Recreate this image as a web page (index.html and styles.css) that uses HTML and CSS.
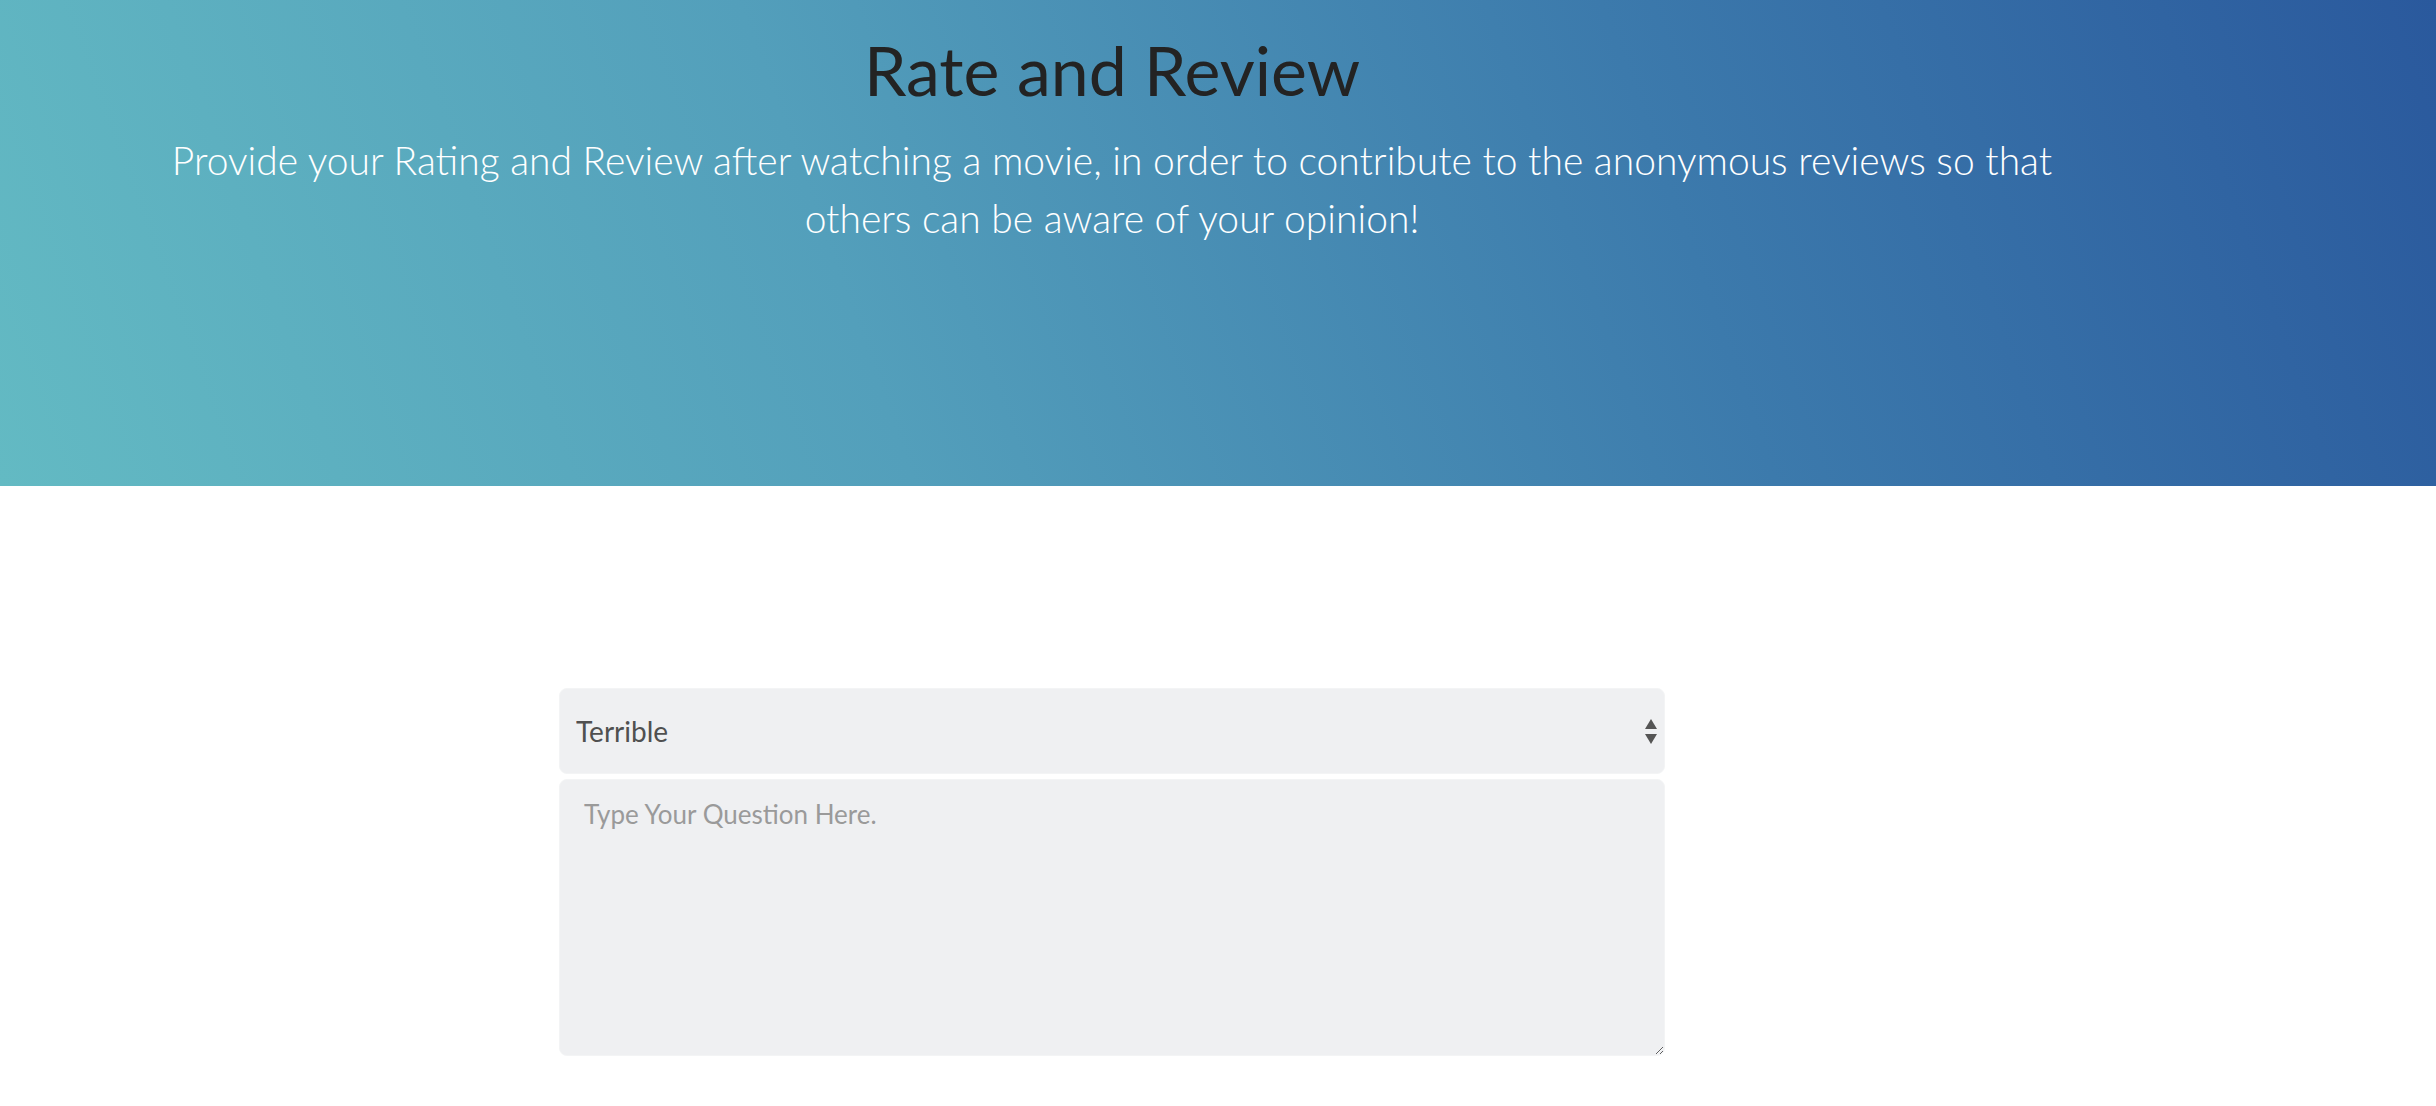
FILE: index.html
```html
<!DOCTYPE html>
<html lang="en">
<head>
<meta charset="utf-8">
<title>Rate and Review</title>
<link rel="stylesheet" href="styles.css">
</head>
<body>
<header class="hero">
  <div class="hero-inner">
    <h1 class="hero-title">Rate and Review</h1>
    <p class="hero-lead">Provide your Rating and Review after watching a movie, in order to contribute to the anonymous reviews so that others can be aware of your opinion!</p>
  </div>
</header>
<main class="content">
  <form class="review-form">
    <div class="select-wrap">
      <select class="field field-select">
        <option>Terrible</option>
        <option>Bad</option>
        <option>Okay</option>
        <option>Good</option>
        <option>Great</option>
      </select>
      <svg class="select-arrows" width="14" height="26" viewBox="0 0 14 26" aria-hidden="true">
        <path d="M7 0 L13 10 L1 10 Z" fill="#555"/>
        <path d="M1 15 L13 15 L7 25 Z" fill="#555"/>
      </svg>
    </div>
    <textarea class="field field-text" placeholder="Type Your Question Here."></textarea>
  </form>
</main>
</body>
</html>
```

FILE: styles.css
```css
html, body {
  margin: 0;
  padding: 0;
}
body {
  font-family: Lato, "Open Sans", "Liberation Sans", sans-serif;
  background: #ffffff;
  color: #212121;
}
.hero {
  height: 486px;
  background: linear-gradient(70deg, #63bac3 0%, #539fbb 35%, #3c7aac 68%, #2a599d 100%);
}
.hero-inner {
  width: 2224px;
  display: flex;
  flex-direction: column;
  align-items: center;
  text-align: center;
}
.hero-title {
  margin: 29px 0 0;
  font-size: 68px;
  font-weight: 400;
  line-height: 1.2;
  color: #232323;
}
.hero-lead {
  margin: 20px 0 0;
  width: 1960px;
  font-size: 39px;
  font-weight: 300;
  line-height: 58px;
  color: #ffffff;
}
.content {
  width: 2224px;
  display: flex;
  justify-content: center;
  padding-top: 202px;
}
.review-form {
  width: 1106px;
  display: flex;
  flex-direction: column;
  gap: 5px;
}
.select-wrap {
  position: relative;
}
.field {
  box-sizing: border-box;
  width: 100%;
  background: #eff0f2;
  border: 1px solid #f3f4f5;
  border-radius: 8px;
  font-family: inherit;
  color: #505050;
  outline: none;
}
.field-select {
  display: block;
  height: 86px;
  padding: 0 16px;
  font-size: 28px;
  font-weight: 400;
  appearance: none;
  -webkit-appearance: none;
}
.select-arrows {
  position: absolute;
  right: 7px;
  top: 31px;
}
.field-text {
  display: block;
  height: 277px;
  padding: 18px 24px;
  font-size: 26px;
  resize: vertical;
}
.field-text::placeholder {
  color: #9a9a9a;
}
```
